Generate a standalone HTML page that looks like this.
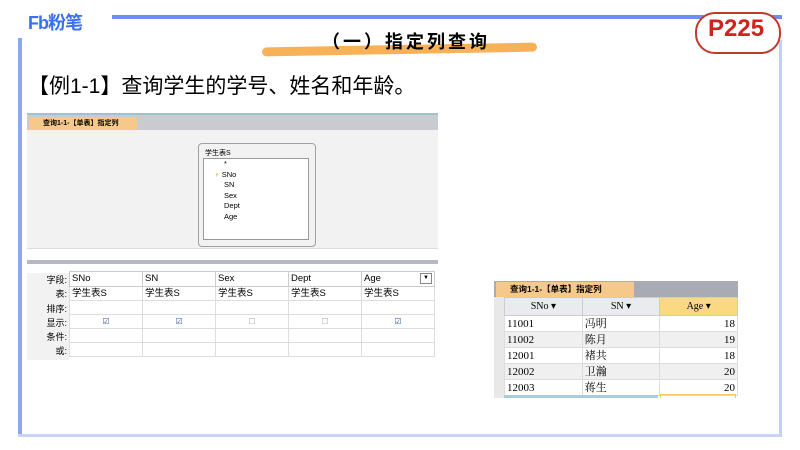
<!DOCTYPE html>
<html><head><meta charset="utf-8"><style>
body{margin:0;width:800px;height:450px;background:#fff;position:relative;overflow:hidden;font-family:"Liberation Sans","Noto Sans CJK SC",sans-serif}
.a{position:absolute}
.t{font-size:9px;color:#000}
td{padding:0 2px;line-height:12px}
.r td{line-height:14px;padding:0 2px}
</style></head><body>
<div class="a" style="left:112px;top:15px;width:670px;height:4px;background:#6f8ff0"></div>
<div class="a" style="left:18px;top:38px;width:4px;height:398px;background:#8da6f2"></div>
<div class="a" style="left:779px;top:40px;width:3px;height:396px;background:#c3d0f6"></div>
<div class="a" style="left:18px;top:434px;width:764px;height:3px;background:#c9d5f7"></div>
<div class="a" style="left:28px;top:9px;font-size:18px;font-weight:bold;color:#3a6ff0;letter-spacing:-1px">Fb粉笔</div>
<div class="a" style="left:262px;top:45px;width:275px;height:9px;background:#f6a43a;border-radius:6px;transform:rotate(-1deg);opacity:.85"></div>
<div class="a" style="left:322px;top:28px;font-size:18px;font-weight:bold;letter-spacing:3px">（一）指定列查询</div>
<div class="a" style="left:695px;top:12px;width:82px;height:38px;border:2px solid #c0392b;border-radius:20px;background:#fff"></div>
<div class="a" style="left:708px;top:15px;font-size:24px;font-weight:bold;color:#d0231d">P225</div>
<div class="a" style="left:28px;top:70px;font-size:21px">【例1-1】查询学生的学号、姓名和年龄。</div>
<div class="a" style="left:27px;top:113px;width:411px;height:245px;background:#fff;border-top:2px solid #9fc3c8">
 <div class="a" style="left:0;top:0;width:411px;height:15px;background:#c9cbd0"></div>
 <div class="a" style="left:2px;top:2px;width:108px;height:13px;background:#f6c98a;font-size:7px;line-height:13px;padding-left:14px;box-sizing:border-box;font-weight:bold">查询1-1-【单表】指定列</div>
 <div class="a" style="left:0;top:15px;width:411px;height:118px;background:#f2f2f2"></div>
 <div class="a" style="left:171px;top:28px;width:116px;height:102px;border:1px solid #a0a0a0;border-radius:4px;background:#f2f2f2">
  <div class="a t" style="left:6px;top:4px;font-size:7px">学生表S</div>
  <div class="a" style="left:4px;top:14px;width:106px;height:82px;border:1px solid #999;background:#fff;font-size:7.5px;line-height:10.5px;padding-left:20px;box-sizing:border-box">*<br><span style="color:#c9a000;margin-left:-10px">♀</span> SNo<br>SN<br>Sex<br>Dept<br>Age</div>
 </div>
 <div class="a" style="left:0;top:133px;width:411px;height:12px;background:#fff;border-top:1px solid #ddd"></div>
 <div class="a" style="left:0;top:145px;width:411px;height:4px;background:#b6b9c4"></div>
 <div class="a" style="left:0;top:149px;width:411px;height:96px;background:#fff"></div>
 <div class="a" style="left:0;top:158px;width:42px;height:87px;background:#f2f2f2;font-size:9px;line-height:14.3px;text-align:right;padding-right:2px;box-sizing:border-box">字段:<br>表:<br>排序:<br>显示:<br>条件:<br>或:</div>
 <table class="a" style="left:42px;top:156px;border-collapse:collapse;font-size:9.5px;table-layout:fixed">
  <tr style="height:15px"><td style="width:68px;border:1px solid #ccc">SNo</td><td style="width:68px;border:1px solid #ccc">SN</td><td style="width:68px;border:1px solid #ccc">Sex</td><td style="width:68px;border:1px solid #ccc">Dept</td><td style="width:68px;border:1px solid #ccc">Age <span style="float:right;border:1px solid #888;font-size:6px;padding:0 2px;line-height:9px">▼</span></td></tr>
  <tr style="height:14px"><td style="border:1px solid #ddd">学生表S</td><td style="border:1px solid #ddd">学生表S</td><td style="border:1px solid #ddd">学生表S</td><td style="border:1px solid #ddd">学生表S</td><td style="border:1px solid #ddd">学生表S</td></tr>
  <tr style="height:14px"><td style="border:1px solid #ddd"></td><td style="border:1px solid #ddd"></td><td style="border:1px solid #ddd"></td><td style="border:1px solid #ddd"></td><td style="border:1px solid #ddd"></td></tr>
  <tr style="height:14px;text-align:center;font-size:8px;color:#3355aa"><td style="border:1px solid #ddd">☑</td><td style="border:1px solid #ddd">☑</td><td style="border:1px solid #ddd;color:#aaa">☐</td><td style="border:1px solid #ddd;color:#aaa">☐</td><td style="border:1px solid #ddd">☑</td></tr>
  <tr style="height:14px"><td style="border:1px solid #ddd"></td><td style="border:1px solid #ddd"></td><td style="border:1px solid #ddd"></td><td style="border:1px solid #ddd"></td><td style="border:1px solid #ddd"></td></tr>
  <tr style="height:14px"><td style="border:1px solid #ddd"></td><td style="border:1px solid #ddd"></td><td style="border:1px solid #ddd"></td><td style="border:1px solid #ddd"></td><td style="border:1px solid #ddd"></td></tr>
 </table>
</div>
<div class="a" style="left:494px;top:281px;width:244px;height:117px;background:#fff;overflow:hidden">
 <div class="a" style="left:0;top:0;width:244px;height:16px;background:#a8abb3"></div>
 <div class="a" style="left:2px;top:1px;width:138px;height:15px;background:#f6c98a;font-size:8.5px;line-height:15px;padding-left:14px;box-sizing:border-box;font-weight:bold">查询1-1-【单表】指定列</div>
 <div class="a" style="left:0;top:16px;width:10px;height:101px;background:#e8e8e8"></div>
 <table class="a r" style="left:10px;top:16px;border-collapse:collapse;font-size:11px;font-family:'Liberation Serif','Noto Serif CJK SC',serif;table-layout:fixed">
  <tr style="height:18px;font-size:10px;background:#e9ebee"><td style="width:73px;border:1px solid #ccc;text-align:center">SNo ▾</td><td style="width:73px;border:1px solid #ccc;text-align:center">SN ▾</td><td style="width:73px;border:1px solid #ccc;text-align:center;background:#fbd983">Age ▾</td></tr>
  <tr style="height:16px"><td style="border:1px solid #ddd">11001</td><td style="border:1px solid #ddd">冯明</td><td style="border:1px solid #ddd;text-align:right">18</td></tr>
  <tr style="height:16px;background:#f0f0f0"><td style="border:1px solid #ddd">11002</td><td style="border:1px solid #ddd">陈月</td><td style="border:1px solid #ddd;text-align:right">19</td></tr>
  <tr style="height:16px"><td style="border:1px solid #ddd">12001</td><td style="border:1px solid #ddd">褚共</td><td style="border:1px solid #ddd;text-align:right">18</td></tr>
  <tr style="height:16px;background:#f0f0f0"><td style="border:1px solid #ddd">12002</td><td style="border:1px solid #ddd">卫瀚</td><td style="border:1px solid #ddd;text-align:right">20</td></tr>
  <tr style="height:16px"><td style="border:1px solid #ddd">12003</td><td style="border:1px solid #ddd">蒋生</td><td style="border:1px solid #ddd;text-align:right">20</td></tr>
 </table>
 <div class="a" style="left:10px;top:114px;width:154px;height:3px;background:#a9c8ee"></div>
 <div class="a" style="left:166px;top:113px;width:76px;height:4px;border:1px solid #f0c860;border-bottom:none;box-sizing:border-box"></div>
</div>
</body></html>
